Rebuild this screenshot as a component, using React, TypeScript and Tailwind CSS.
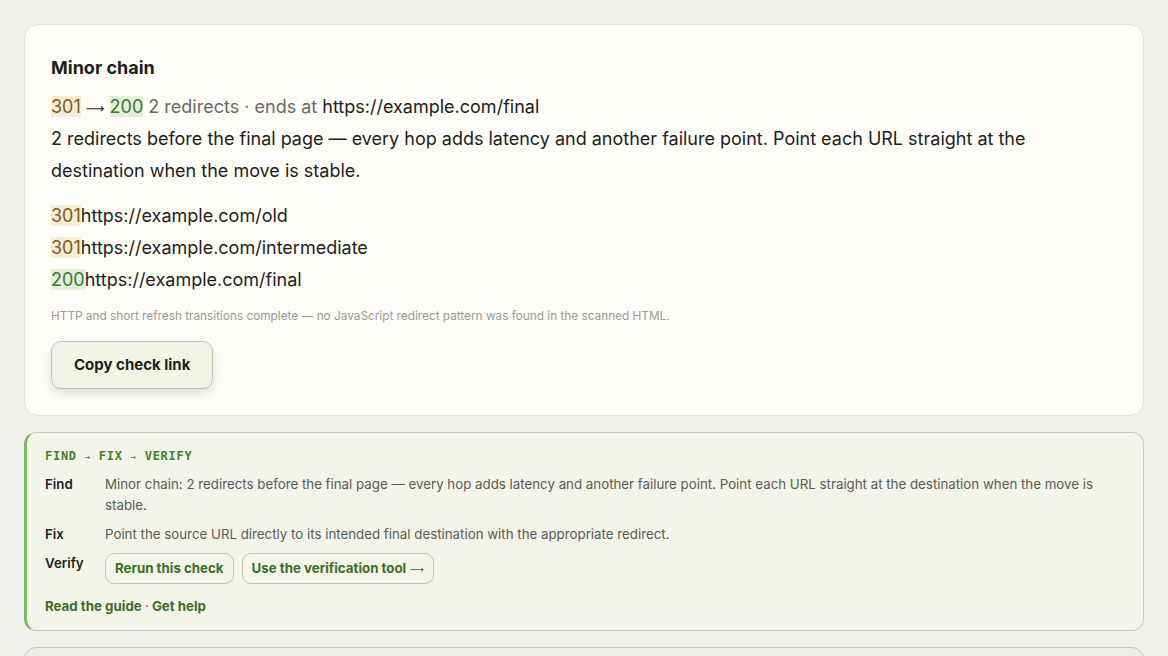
import React from 'react';

const hops = [
  { code: '301', url: 'https://example.com/old', tone: 'warn' },
  { code: '301', url: 'https://example.com/intermediate', tone: 'warn' },
  { code: '200', url: 'https://example.com/final', tone: 'ok' },
];

const Code: React.FC<{ code: string; tone: string }> = ({ code, tone }) => (
  <span
    className={
      tone === 'ok'
        ? 'bg-[#e4eedb] text-[#3b7a2c]'
        : 'bg-[#f6edd6] text-[#7d5c1c]'
    }
  >
    {code}
  </span>
);

// long thin arrow like the reference's font
const Arrow: React.FC<{ className?: string }> = ({ className = '' }) => (
  <span className={`font-normal leading-none ${className}`} style={{ fontFamily: '"DejaVu Sans", sans-serif' }}>⟶</span>
);

const App: React.FC = () => {
  return (
    <div
      className="min-h-screen bg-[#f2f0ea] px-6 pt-6 text-[#1f1f1b]"
      style={{ fontFamily: 'Inter, "Noto Sans", sans-serif' }}
    >
      <section className="rounded-[14px] border border-[#e4e1d9] bg-[#fdfcf7] px-[26px] pt-[30px] pb-[26px]">
        <h2 className="text-[18px] leading-[26px] font-bold">Minor chain</h2>
        <div className="mt-[10px] text-[18px] leading-[32px]">
          <p>
            <Code code="301" tone="warn" /> <Arrow className="text-[13px]" /> <Code code="200" tone="ok" />{' '}
            <span className="text-[#6b6a64]">2 redirects · ends at</span>{' '}
            https://example.com/final
          </p>
          <p>
            2 redirects before the final page — every hop adds latency and another failure point. Point
            each URL straight at the destination when the move is stable.
          </p>
        </div>
        <ul className="mt-[13px] text-[18px] leading-[32px]">
          {hops.map((h, i) => (
            <li key={i}>
              <Code code={h.code} tone={h.tone} />
              {h.url}
            </li>
          ))}
        </ul>
        <p className="mt-[12px] text-[11.8px] leading-[16px] text-[#9b9a93]">
          HTTP and short refresh transitions complete — no JavaScript redirect pattern was found in the scanned HTML.
        </p>
        <button className="mt-[17px] h-[48px] rounded-[10px] border border-[#c4c5b9] bg-[#f2f4e8] px-[22px] text-[15px] font-bold shadow-[0_5px_10px_rgba(60,60,40,0.14)]">
          Copy check link
        </button>
      </section>

      <section className="mt-4 rounded-[12px] border border-[#c9cabe] border-l-[3px] border-l-[#7db86b] bg-[#f3f5ea] pl-[18px] pr-[26px] pt-[15px] pb-[14px] text-[13.3px]">
        <div
          className="text-[12px] leading-[16px] font-bold tracking-[0.06em] text-[#44802f]"
          style={{ fontFamily: '"DejaVu Sans Mono", monospace' }}
        >
          FIND <span className="font-normal text-[9px]">→</span> FIX <span className="font-normal text-[9px]">→</span> VERIFY
        </div>
        <div className="mt-[9px] grid grid-cols-[60px_1fr] gap-y-[8px] leading-[21px]">
          <div className="font-semibold">Find</div>
          <div className="text-[#5b5a54]">
            Minor chain: 2 redirects before the final page — every hop adds latency and another failure point. Point
            each URL straight at the destination when the move is stable.
          </div>
          <div className="font-semibold">Fix</div>
          <div className="text-[#5b5a54]">
            Point the source URL directly to its intended final destination with the appropriate redirect.
          </div>
          <div className="font-semibold">Verify</div>
          <div className="flex gap-2">
            <button className="h-[31px] rounded-[9px] border border-[#c3c5b8] px-[9px] font-bold text-[#3d6e26]">
              Rerun this check
            </button>
            <button className="h-[31px] rounded-[9px] border border-[#c3c5b8] px-[9px] font-bold text-[#3d6e26]">
              Use the verification tool <Arrow className="text-[10px]" />
            </button>
          </div>
        </div>
        <div className="mt-[12px] leading-[20px] font-bold text-[#3d6e26]">
          <a>Read the guide</a> <span className="font-normal text-[#6b6a64]">·</span> <a>Get help</a>
        </div>
      </section>

      <section className="mt-4 h-[60px] rounded-[12px] border border-[#c9cabe] bg-[#efede4]" />
    </div>
  );
};

export default App;
